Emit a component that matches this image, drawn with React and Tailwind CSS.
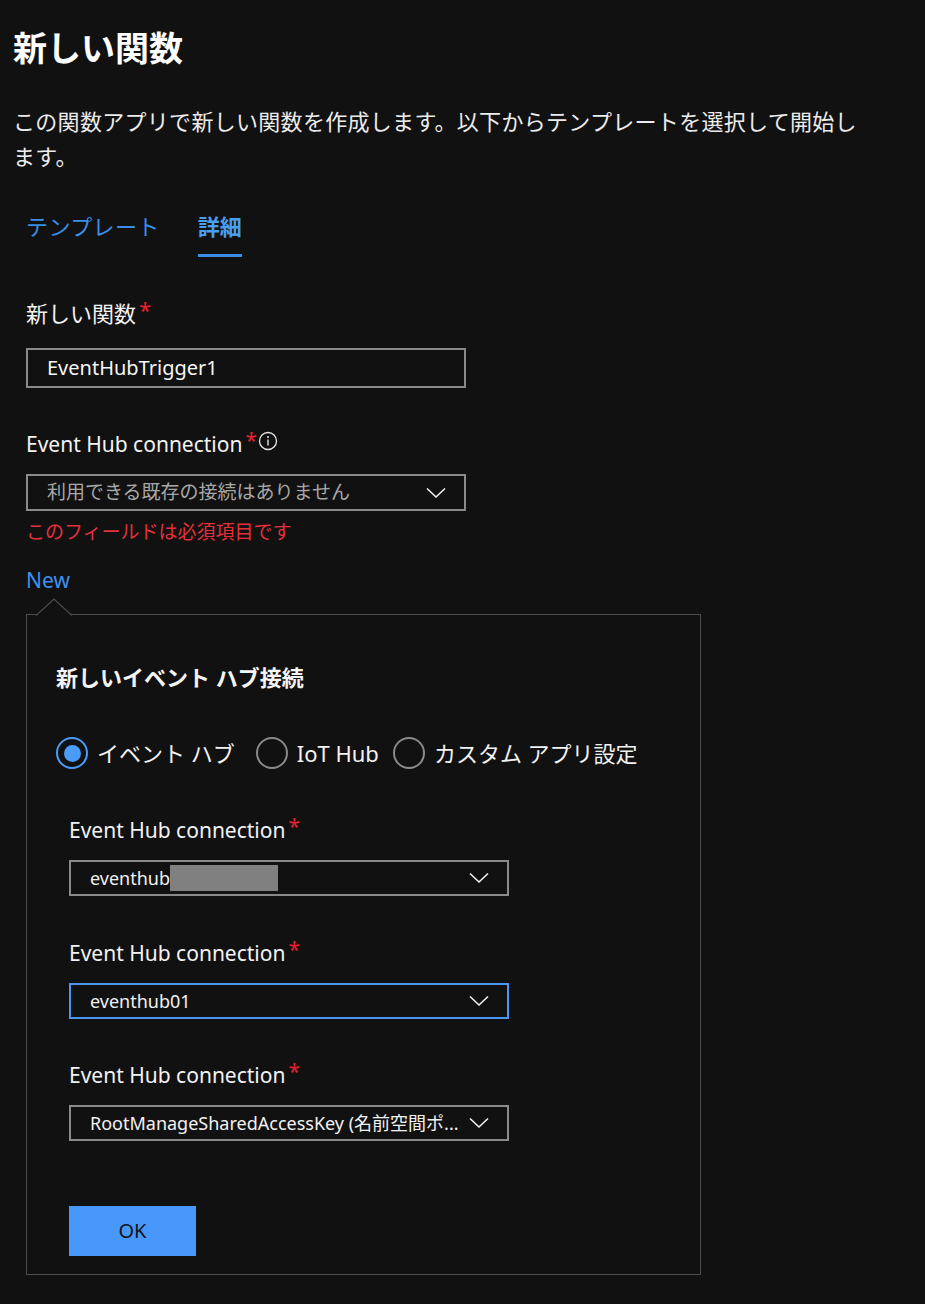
import React from "react";

const FONT = { fontFamily: '"Noto Sans", "Noto Sans CJK JP", sans-serif' };

function Chevron() {
  return (
    <svg width="20" height="12" viewBox="0 0 20 12" className="shrink-0">
      <polyline points="1,1.5 10,10 19,1.5" fill="none" stroke="#f2f2f2" strokeWidth="1.6" />
    </svg>
  );
}

function Req() {
  return <span className="text-[#e8202f] ml-[3px] relative -top-[4px]">*</span>;
}

function Radio({ checked, label, gapAfter }) {
  return (
    <div className={"flex items-center " + (gapAfter || "")}>
      <div
        className={
          checked
            ? "w-[32px] h-[32px] rounded-full border-2 border-[#4a9cf8] flex items-center justify-center"
            : "w-[32px] h-[32px] rounded-full border-2 border-[#8a8a8a]"
        }
      >
        {checked && <div className="w-[17px] h-[17px] rounded-full bg-[#4a9cf8]" />}
      </div>
      <span className="ml-[9px] text-[22px] leading-[32px] text-[#f2f2f2]">{label}</span>
    </div>
  );
}

function SubField({ children, focus, mt }) {
  return (
    <div className={mt}>
      <div className="h-[30px] leading-[30px] text-[21px] text-[#f2f2f2] flex items-center">
        <span>Event Hub connection</span>
        <Req />
      </div>
      <div
        className={
          focus
            ? "mt-[15px] w-[440px] h-[36px] border-2 border-[#4a96f2] flex items-center pl-[19px] pr-[18px]"
            : "mt-[15px] w-[440px] h-[36px] border-2 border-[#8a8a8a] flex items-center pl-[19px] pr-[18px]"
        }
      >
        <div className="flex-1 flex items-center overflow-hidden whitespace-nowrap text-[18px] text-[#f2f2f2]">
          {children}
        </div>
        <Chevron />
      </div>
    </div>
  );
}

export default function App() {
  return (
    <div className="w-[925px] min-h-[1304px] bg-[#111111] text-white overflow-hidden" style={FONT}>
      <div className="pl-[13px] pt-[24px]">
        <h1 className="h-[48px] leading-[48px] text-[34px] font-bold text-white">新しい関数</h1>
        <p className="mt-[32px] w-[860px] text-[22px] leading-[35px] text-[#ececec] tracking-[0.3px]">
          この関数アプリで新しい関数を作成します。以下からテンプレートを選択して開始します。
        </p>
      </div>

      <div className="pl-[26px]">
        <div className="mt-[37px] flex items-start gap-[38px]">
          <div className="flex flex-col">
            <span className="text-[22px] leading-[30px] text-[#3a8ee6] tracking-[0.4px]">テンプレート</span>
          </div>
          <div className="flex flex-col">
            <span className="text-[22px] leading-[30px] font-bold text-[#4a9ef0]">詳細</span>
            <div className="mt-[13px] h-[3px] bg-[#3b8de5]" />
          </div>
        </div>

        <div className="mt-[41px] h-[30px] leading-[30px] text-[22px] text-[#f2f2f2] flex items-center">
          <span>新しい関数</span>
          <Req />
        </div>
        <div className="mt-[20px] w-[440px] h-[40px] border-2 border-[#8a8a8a] flex items-center pl-[19px]">
          <span className="text-[20px] text-[#f5f5f5]">EventHubTrigger1</span>
        </div>

        <div className="mt-[41px] h-[30px] leading-[30px] text-[21px] text-[#f2f2f2] flex items-center">
          <span>Event Hub connection</span>
          <Req />
          <svg width="20" height="20" viewBox="0 0 20 20" className="ml-[1px] relative -top-[3px]">
            <circle cx="10" cy="10" r="8.5" fill="none" stroke="#e6e6e6" strokeWidth="1.3" />
            <circle cx="10" cy="6" r="1" fill="#e6e6e6" />
            <line x1="10" y1="8.5" x2="10" y2="14.5" stroke="#e6e6e6" strokeWidth="1.4" />
          </svg>
        </div>
        <div className="mt-[15px] w-[440px] h-[37px] border-2 border-[#8a8a8a] flex items-center pl-[19px] pr-[18px]">
          <span className="flex-1 text-[19px] text-[#a8a8a8]">利用できる既存の接続はありません</span>
          <Chevron />
        </div>
        <div className="mt-[8px] h-[26px] leading-[26px] text-[19px] text-[#e5303c]">このフィールドは必須項目です</div>
        <div className="mt-[20px] h-[30px] leading-[30px] text-[21px] text-[#3c91f0]">New</div>

        <div className="relative mt-[19px] w-[675px] h-[661px] border border-[#4d4d4d] pl-[29px] pt-[47px]">
          <svg width="36" height="18" viewBox="0 0 36 18" className="absolute left-[9px] -top-[17px]">
            <polygon points="0,17.5 18,1 36,17.5 36,18 0,18" fill="#111111" />
            <polyline points="0,17.5 18,1 36,17.5" fill="none" stroke="#4d4d4d" strokeWidth="1.2" />
          </svg>
          <div className="h-[30px] leading-[30px] text-[22px] font-bold text-[#f5f5f5]">新しいイベント ハブ接続</div>
          <div className="mt-[45px] flex items-center">
            <Radio checked label="イベント ハブ" gapAfter="mr-[21px]" />
            <Radio label="IoT Hub" gapAfter="mr-[14px]" />
            <Radio label="カスタム アプリ設定" />
          </div>

          <div className="ml-[13px]">
            <SubField mt="mt-[46px]">
              <span>eventhub</span>
              <span className="inline-block w-[108px] h-[26px] bg-[#808080]" />
            </SubField>
            <SubField mt="mt-[42px]" focus>
              <span>eventhub01</span>
            </SubField>
            <SubField mt="mt-[41px]">
              <span>RootManageSharedAccessKey (名前空間ポ...</span>
            </SubField>
            <button className="mt-[65px] w-[127px] h-[50px] bg-[#4897fa] text-[20px] text-[#141414] flex items-center justify-center">
              OK
            </button>
          </div>
        </div>
      </div>
    </div>
  );
}
